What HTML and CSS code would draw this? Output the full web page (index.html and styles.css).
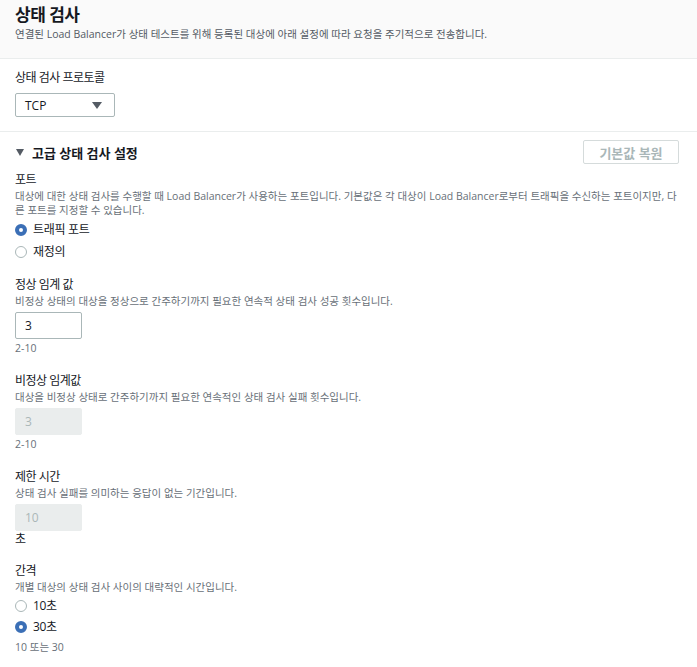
FILE: index.html
```html
<!DOCTYPE html>
<html lang="ko">
<head>
<meta charset="utf-8">
<link rel="stylesheet" href="styles.css">
</head>
<body>
<div class="header">
  <h1 class="title">상태 검사</h1>
  <p class="subtitle">연결된 Load Balancer가 상태 테스트를 위해 등록된 대상에 아래 설정에 따라 요청을 주기적으로 전송합니다.</p>
</div>
<div class="protocol">
  <div class="label">상태 검사 프로토콜</div>
  <div class="select"><span>TCP</span><span class="caret"></span></div>
</div>
<div class="advanced">
  <div class="adv-head">
    <div class="adv-title"><span class="tri"></span>고급 상태 검사 설정</div>
    <div class="btn">기본값 복원</div>
  </div>

  <div class="field f-port">
    <div class="label">포트</div>
    <div class="desc">대상에 대한 상태 검사를 수행할 때 Load Balancer가 사용하는 포트입니다. 기본값은 각 대상이 Load Balancer로부터 트래픽을 수신하는 포트이지만, 다른 포트를 지정할 수 있습니다.</div>
    <div class="radio-row"><span class="radio on"></span>트래픽 포트</div>
    <div class="radio-row"><span class="radio"></span>재정의</div>
  </div>

  <div class="field f-healthy">
    <div class="label">정상 임계 값</div>
    <div class="desc">비정상 상태의 대상을 정상으로 간주하기까지 필요한 연속적 상태 검사 성공 횟수입니다.</div>
    <div class="input">3</div>
    <div class="hint">2-10</div>
  </div>

  <div class="field f-gap">
    <div class="label">비정상 임계값</div>
    <div class="desc">대상을 비정상 상태로 간주하기까지 필요한 연속적인 상태 검사 실패 횟수입니다.</div>
    <div class="input disabled">3</div>
    <div class="hint">2-10</div>
  </div>

  <div class="field f-gap">
    <div class="label">제한 시간</div>
    <div class="desc">상태 검사 실패를 의미하는 응답이 없는 기간입니다.</div>
    <div class="input disabled">10</div>
    <div class="unit">초</div>
  </div>

  <div class="field f-interval">
    <div class="label">간격</div>
    <div class="desc">개별 대상의 상태 검사 사이의 대략적인 시간입니다.</div>
    <div class="radio-row tight"><span class="radio"></span>10초</div>
    <div class="radio-row tight"><span class="radio on"></span>30초</div>
    <div class="hint h-interval">10 또는 30</div>
  </div>
</div>
</body>
</html>
```
FILE: styles.css
```css
* { box-sizing: border-box; }
html, body { margin: 0; padding: 0; background: #fff; }
body {
  font-family: "Open Sans", "Noto Sans CJK KR", sans-serif;
  color: #16191f;
  width: 697px;
}
.header {
  background: #fafafa;
  padding: 4px 15px 16px;
  border-bottom: 1px solid #eaeded;
}
.title {
  margin: 0;
  font-size: 17px;
  line-height: 22px;
  font-weight: 700;
  letter-spacing: -0.5px;
  color: #16191f;
}
.subtitle {
  margin: 0;
  font-size: 10.5px;
  line-height: 16px;
  color: #545b64;
}
.protocol {
  padding: 11px 15px 14px;
  border-bottom: 1px solid #eaeded;
}
.label {
  font-size: 12px;
  line-height: 16px;
  letter-spacing: -0.5px;
  color: #16191f;
}
.protocol .label { margin-bottom: 7px; }
.select {
  width: 100px;
  height: 24px;
  border: 1px solid #aab7b8;
  border-radius: 2px;
  display: flex;
  align-items: center;
  justify-content: space-between;
  padding: 0 12px 0 9px;
  font-size: 12px;
  color: #16191f;
}
.caret {
  width: 0; height: 0;
  border-left: 5px solid transparent;
  border-right: 5px solid transparent;
  border-top: 7px solid #545b64;
}
.advanced { padding: 8px 18px 0 15px; }
.adv-head {
  display: flex;
  justify-content: space-between;
  align-items: center;
  height: 24px;
}
.adv-title {
  display: flex;
  align-items: center;
  font-size: 13px;
  font-weight: 700;
  color: #16191f;
}
.tri {
  width: 0; height: 0;
  border-left: 4px solid transparent;
  border-right: 4px solid transparent;
  border-top: 7px solid #545b64;
  margin: 0 8px 0 1px;
}
.btn {
  width: 96px;
  height: 24px;
  border: 1px solid #d5dbdb;
  border-radius: 2px;
  display: flex;
  align-items: center;
  justify-content: center;
  font-size: 13px;
  font-weight: 700;
  color: #aab7b8;
}
.f-port { margin-top: 8px; }
.f-healthy { margin-top: 16px; }
.f-gap { margin-top: 18px; }
.f-interval { margin-top: 16px; }
.desc {
  font-size: 10.5px;
  line-height: 14px;
  color: #687078;
  margin-top: 1px;
}
.radio-row {
  display: flex;
  align-items: center;
  font-size: 12px;
  line-height: 18px;
  letter-spacing: -0.3px;
  margin-top: 4px;
}
.radio-row.tight { margin-top: 3px; }
.radio {
  width: 12px; height: 12px;
  border-radius: 50%;
  border: 1px solid #aab7b8;
  background: #fff;
  margin-right: 6px;
}
.radio.on {
  border: 4px solid #3b6fb6;
  background: #fff;
}
.input {
  width: 67px;
  height: 27px;
  margin-top: 4px;
  border: 1px solid #aab7b8;
  border-radius: 2px;
  padding: 0 9px;
  display: flex;
  align-items: center;
  font-size: 12px;
  color: #16191f;
}
.input.disabled {
  border-color: #eaeded;
  background: #eaeded;
  color: #aab7b8;
}
.hint {
  font-size: 10.5px;
  line-height: 14px;
  color: #687078;
  margin-top: 2px;
}
.h-interval { margin-top: 4px; }
.unit {
  font-size: 12px;
  line-height: 16px;
}
```
